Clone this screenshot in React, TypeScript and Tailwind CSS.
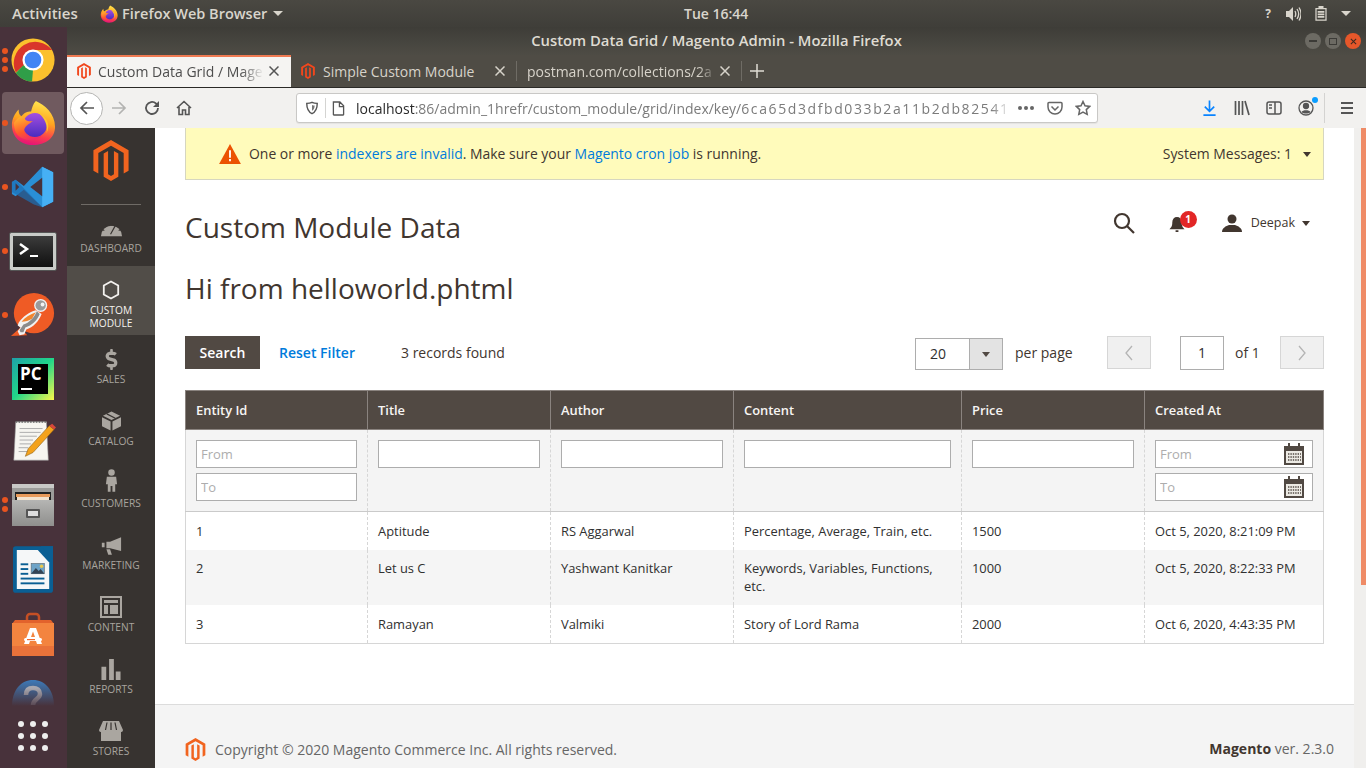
import React from "react";
import { FaDollarSign } from "react-icons/fa";

const SANS = "font-['Open_Sans',sans-serif]";

const MagentoLogo = ({ className }: { className: string }) => (
  <svg viewBox="0 0 36 42" className={className}>
    <path fill="currentColor" d="M18 0 36 10.400v21L31 34.300V13.300L18 5.800 5 13.300v21L0 31.400v-21Z" />
    <path fill="currentColor" d="M18 42 10.500 37.600V13.800l4.500-2.600v23.900l3 1.800 3-1.800V11.200l4.500 2.600v23.800Z" />
  </svg>
);

const Chrome = () => (
  <svg viewBox="0 0 48 48" className="h-[46px] w-[46px]">
    <circle cx="24" cy="24" r="22.500" fill="#fbc02d" />
    <path fill="#d9352b" d="M44 13.500H24L13.800 30 6 37A22.500 22.500 0 0 1 44 13.500Z" />
    <path fill="#2f9e48" d="M6 37.500 14 29.500l10 5-1 12A22.500 22.500 0 0 1 6 37.500Z" />
    <circle cx="24" cy="24" r="11" fill="#fff" />
    <circle cx="24" cy="24" r="8.700" fill="#4285f4" />
  </svg>
);

const Firefox = ({ size, id }: { size: string; id: string }) => (
  <svg viewBox="0 0 48 48" className={size}>
    <defs>
      <linearGradient id={`${id}a`} x1="0.6" y1="0" x2="0.4" y2="1">
        <stop offset="0" stopColor="#ffe54d" />
        <stop offset="0.45" stopColor="#ffa51f" />
        <stop offset="0.78" stopColor="#fb3b4f" />
        <stop offset="1" stopColor="#e3127a" />
      </linearGradient>
      <linearGradient id={`${id}b`} x1="0.5" y1="0" x2="0.5" y2="1">
        <stop offset="0" stopColor="#a44fe0" />
        <stop offset="1" stopColor="#4a2cc0" />
      </linearGradient>
      <linearGradient id={`${id}c`} x1="0.2" y1="0" x2="0.6" y2="1">
        <stop offset="0" stopColor="#ffb52e" />
        <stop offset="0.6" stopColor="#ff5a2a" />
        <stop offset="1" stopColor="#f02a6a" />
      </linearGradient>
    </defs>
    <path fill={`url(#${id}a)`} d="M27 1C36 5 47 14 47 28 47 40 37 47 24 47 11 47 2 38 2 26 2 20 5 14 9 10c0 4 1 6 3 7 3-4 6-5 10-5 1-4 2-8 5-11Z" />
    <circle cx="26" cy="26" r="12.500" fill={`url(#${id}b)`} />
    <path fill={`url(#${id}c)`} d="M4 24c4-6 8-8 12-6-2 2 2 5 8 4-4 3-10 6-9 11 2 6 11 8 18 4-4 7-21 7-27-3-1-3-2-7-2-10Z" />
    <path fill="#ffc42e" d="M29 13c9 4 14 12 9 22 2-8-2-17-9-22Z" />
  </svg>
);

const VSCode = () => (
  <svg viewBox="0 0 48 48" className="h-[44px] w-[44px]">
    <path fill="#2a8fd6" d="M34 2 46 8v32l-12 6-20-19-9 7-4-2.500V18.500L5 16l9 7Z" />
    <path fill="#1c6fb5" d="M1 18.500 5 16l29 30-9-3L1 29.500Z" opacity=".7" />
    <path fill="#46b0f5" d="M34 2 46 8v32l-12 6Z" />
    <path fill="#48323b" d="M34 14 21 24l13 10Z" />
    <path fill="#48323b" d="M5 20v8l4-4Z" />
  </svg>
);

const Terminal = () => (
  <div className="flex h-[37px] w-[46px] items-center rounded-[1px] border-[3px] border-[#c9cbc8] bg-gradient-to-b from-[#3c3c3c] to-[#111] outline outline-1 outline-[#555]">
    <svg viewBox="0 0 40 31" className="h-full w-full">
      <path d="M7 8l7 5-7 5" fill="none" stroke="#fff" strokeWidth="2.500" />
      <path d="M17 20h8" stroke="#fff" strokeWidth="2" />
    </svg>
  </div>
);

const Postman = () => (
  <svg viewBox="0 0 48 48" className="h-[46px] w-[46px]">
    <circle cx="25" cy="22" r="21" fill="#ef5b25" />
    <path fill="#ef5b25" d="M1 46l10-9 7 8Z" />
    <path fill="#f2f2f2" d="M9 32c5-7 11-11 18-13l6 4c-3 8-9 14-16 16l-2 5-5 1-2-4 3-4-3-2Z" />
    <path fill="#f2852f" d="M12 31c4-5 9-8 15-10l-4 7c-3 2-7 3-11 3Z" />
    <path fill="#8b8b8b" d="M28 20l3 3c-3 7-8 12-15 14l-2 5-3 0-1-2 4-6c6-2 11-7 14-14Z" />
    <circle cx="32" cy="14" r="6.800" fill="#f2f2f2" />
    <circle cx="32" cy="14" r="5.400" fill="#9a9a9a" />
    <circle cx="34" cy="13" r="2" fill="#f2f2f2" />
  </svg>
);

const PyCharm = () => (
  <svg viewBox="0 0 42 42" className="h-[42px] w-[42px]">
    <defs>
      <linearGradient id="pcg" x1="0" y1="0" x2="1" y2="1">
        <stop offset="0" stopColor="#1ea0a8" />
        <stop offset="0.5" stopColor="#21d789" />
        <stop offset="1" stopColor="#fcf84a" />
      </linearGradient>
    </defs>
    <rect width="42" height="42" fill="url(#pcg)" />
    <rect x="6" y="6" width="30" height="30" fill="#000" />
    <text x="8" y="22" fill="#fff" fontSize="17" fontWeight="700" fontFamily="Open Sans">PC</text>
    <rect x="9" y="30" width="11" height="2" fill="#fff" />
  </svg>
);

const Editor = () => (
  <svg viewBox="0 0 48 48" className="h-[46px] w-[46px]">
    <path fill="#f6f5f0" stroke="#999" strokeWidth=".6" d="M6 4h32l2 40H4Z" />
    <path stroke="#666" strokeWidth="2" strokeDasharray="1.500 1.500" d="M6 4h32" />
    <path stroke="#aaa" strokeWidth="1" d="M10 11h24M10 15h22M10 19h18M10 23h14M10 27h12M9 31h10M9 35h12" />
    <path fill="#f3a21c" stroke="#8a5a10" strokeWidth=".6" d="M41 8l5 4-22 24-8 4 3-8Z" />
    <path fill="#d8473a" d="M41 8l3-2 4 4-2 2Z" />
  </svg>
);

const Files = () => (
  <svg viewBox="0 0 44 44" className="h-[44px] w-[44px]">
    <defs>
      <linearGradient id="flg" x1="0" y1="0" x2="0" y2="1">
        <stop offset="0" stopColor="#b5b5b3" />
        <stop offset="1" stopColor="#8f8f8d" />
      </linearGradient>
    </defs>
    <rect x="1" y="1" width="42" height="42" rx="2" fill="#9c9c9a" />
    <rect x="1" y="1" width="42" height="4" fill="#c8c8c6" />
    <rect x="4" y="9" width="36" height="9" fill="#222" />
    <rect x="5" y="11" width="34" height="3" fill="#e89a5a" />
    <rect x="6" y="14" width="32" height="3" fill="#f4e3ce" />
    <rect x="1" y="17" width="42" height="26" fill="url(#flg)" />
    <rect x="15" y="26" width="14" height="9" rx="1" fill="#555" />
    <rect x="17" y="28" width="10" height="5" fill="#ddd" />
  </svg>
);

const Writer = () => (
  <svg viewBox="0 0 42 50" className="h-[48px] w-[40px]">
    <path fill="#0a5f94" d="M3 0h39v46a3 3 0 0 1-3 3H3a3 3 0 0 1-3-3V3a3 3 0 0 1 3-3Z" />
    <path fill="#f5f7f8" d="M4 4h22l12 13v28H4Z" />
    <path fill="#0a5f94" d="M29 0h13v14Z" />
    <rect x="8" y="18" width="8" height="2" fill="#0a5f94" />
    <rect x="8" y="23" width="8" height="2" fill="#0a5f94" />
    <rect x="8" y="28" width="8" height="2" fill="#0a5f94" />
    <rect x="8" y="33" width="25" height="2" fill="#0a5f94" />
    <rect x="8" y="38" width="25" height="2" fill="#0a5f94" />
    <rect x="19" y="18" width="14" height="11" fill="#6da3c7" stroke="#555" strokeWidth=".5" />
    <path fill="#345" d="M19 29l5-6 3 3 2-2 4 5Z" />
    <circle cx="30" cy="21" r="1.800" fill="#ecc84a" />
  </svg>
);

const Software = () => (
  <svg viewBox="0 0 42 44" className="h-[44px] w-[42px]">
    <path fill="none" stroke="#c54f24" strokeWidth="2.500" d="M15 11V5a3 3 0 0 1 3-3h6a3 3 0 0 1 3 3v6" />
    <path fill="#e2622c" d="M3 8h36l3 4H0Z" />
    <path fill="#f3843f" d="M0 11h42v33H0Z" />
    <path fill="#e9723a" d="M0 34h42v10H0Z" />
    <path fill="#fff" d="M18 16h6l6 16h-5l-1-3h-6l-1 3h-5Zm3 3.500L19 25h4Z" />
    <rect x="12" y="26" width="18" height="3" rx="1.500" fill="#fff" />
    <rect x="15" y="27" width="8" height="1.200" fill="#ef6a30" />
  </svg>
);

const Help = () => (
  <svg viewBox="0 0 42 26" className="h-[26px] w-[42px]">
    <defs>
      <linearGradient id="hg" x1="0" y1="0" x2="0" y2="1">
        <stop offset="0" stopColor="#3d7ab8" />
        <stop offset="1" stopColor="#48323b" />
      </linearGradient>
      <linearGradient id="hq" x1="0" y1="0" x2="0" y2="1">
        <stop offset="0" stopColor="#a8a8b0" />
        <stop offset="1" stopColor="#5a4a55" />
      </linearGradient>
    </defs>
    <path fill="url(#hg)" d="M0 26C0 10 9 0 21 0s21 10 21 26Z" />
    <path fill="none" stroke="url(#hq)" strokeWidth="4.500" d="M14 15c0-5 3-7 7-7s7 2 7 6c0 5-7 5-7 11" />
  </svg>
);

const AppGrid = () => (
  <div className="grid grid-cols-3 gap-x-[6px] gap-y-[6px]">
    {[0, 1, 2, 3, 4, 5, 6, 7, 8].map((d) => (
      <span key={d} className="h-[6px] w-[6px] rounded-full bg-[#eeeeee]" />
    ))}
  </div>
);

const dock = [
  { id: "chrome", icon: <Chrome />, dots: 3, h: "h-[65px]" },
  { id: "firefox", icon: <Firefox size="h-[46px] w-[46px]" id="fxd" />, dots: 1, h: "h-[62px]", active: true },
  { id: "code", icon: <VSCode />, dots: 1, h: "h-[65px]" },
  { id: "term", icon: <Terminal />, dots: 1, h: "h-[64px]" },
  { id: "postman", icon: <Postman />, dots: 1, h: "h-[64px]" },
  { id: "pycharm", icon: <PyCharm />, dots: 0, h: "h-[63px]" },
  { id: "editor", icon: <Editor />, dots: 0, h: "h-[62px]" },
  { id: "files", icon: <Files />, dots: 2, h: "h-[65px]" },
  { id: "writer", icon: <Writer />, dots: 0, h: "h-[65px]" },
  { id: "software", icon: <Software />, dots: 0, h: "h-[64px]" },
];

const Dock = () => (
  <aside className="flex h-full w-[67px] shrink-0 flex-col items-start overflow-hidden bg-[#48323b] pl-[2px]">
    {dock.map((d) => (
      <div key={d.id} className={`relative flex w-[62px] items-center justify-center rounded-[4px] ${d.h} ${d.active ? "bg-[#705a5f]" : ""}`}>
        <div className="absolute left-0 top-0 flex h-full flex-col justify-center gap-[3px]">
          {Array.from({ length: d.dots }).map((_, i) => (
            <span key={i} className="h-[6px] w-[6px] rounded-full bg-[#e95420]" />
          ))}
        </div>
        {d.icon}
      </div>
    ))}
    <div className="ml-[10px] mt-[14px] flex h-[26px] items-start justify-center">
      <Help />
    </div>
    <div className="ml-[16px] mt-[15px]">
      <AppGrid />
    </div>
  </aside>
);

const TopBar = () => (
  <div className={`flex h-[27px] shrink-0 items-center bg-gradient-to-b from-[#4a4842] to-[#3f3e39] pl-[12px] pr-[15px] text-[14.500px] font-semibold text-[#d9d5cc] ${SANS}`}>
    <div className="flex w-[672px] items-center">
      <span className="w-[88px] text-[15px]">Activities</span>
      <Firefox size="h-[18px] w-[18px]" id="fxt" />
      <span className="ml-[4px]">Firefox Web Browser</span>
      <span className="ml-[6px] h-0 w-0 border-x-[5px] border-t-[5px] border-x-transparent border-t-[#d9d5cc]" />
    </div>
    <span className="text-[14px]">Tue 16:44</span>
    <div className="ml-auto flex items-center gap-[14px]">
      <span className="text-[12px] font-bold">?</span>
      <svg viewBox="0 0 16 16" className="h-[16px] w-[16px]" fill="#d9d5cc">
        <path d="M1 5h3l4-4v14l-4-4H1Z" />
        <path fill="none" stroke="#d9d5cc" strokeWidth="1.300" d="M10 5c1 2 1 4 0 6M12 3c2 3 2 7 0 10M14 1.500c2.500 4 2.500 9 0 13" />
      </svg>
      <svg viewBox="0 0 14 18" className="h-[15px] w-[12px]" fill="none" stroke="#d9d5cc" strokeWidth="1.500">
        <path d="M1 3h12v14H1Z" />
        <path fill="#d9d5cc" stroke="none" d="M4 0h6v3H4ZM3 6h8v2H3Zm0 3h8v2H3Zm0 3h8v2H3Z" />
      </svg>
      <span className="h-0 w-0 border-x-[5px] border-t-[5px] border-x-transparent border-t-[#d9d5cc]" />
    </div>
  </div>
);

const TitleBar = () => (
  <div className={`relative flex h-[28px] shrink-0 items-center justify-center bg-gradient-to-b from-[#3e3d38] to-[#4e4c45] pb-[2px] text-[14.800px] font-semibold text-[#dfdbd2] ${SANS}`}>
    <span>Custom Data Grid / Magento Admin - Mozilla Firefox</span>
    <div className="absolute right-[5px] top-[6px] flex gap-[4px]">
      <span className="flex h-[16px] w-[16px] items-center justify-center rounded-full bg-[#6c6a63]">
        <span className="h-[1.500px] w-[8px] bg-[#3c3b37]" />
      </span>
      <span className="flex h-[16px] w-[16px] items-center justify-center rounded-full bg-[#6c6a63]">
        <span className="h-[7px] w-[8px] border border-[#3c3b37]" />
      </span>
      <span className="flex h-[16px] w-[16px] items-center justify-center rounded-full bg-[#e6572a]">
        <svg viewBox="0 0 8 8" className="h-[7px] w-[7px]" stroke="#3c2a20" strokeWidth="1.200">
          <path d="M1 1l6 6M7 1 1 7" />
        </svg>
      </span>
    </div>
  </div>
);

const X = ({ color }: { color: string }) => (
  <svg viewBox="0 0 10 10" className="h-[10px] w-[10px]" fill="none" stroke={color} strokeWidth="1.500">
    <path d="M.5.5l9 9M9.500.5l-9 9" />
  </svg>
);

const TabBar = () => (
  <div className={`flex h-[33px] shrink-0 items-stretch border-b border-[#2b2a27] bg-[#4f4c45] text-[14px] ${SANS}`}>
    <div className="flex w-[224px] items-center border-t-2 border-[#ef7a52] bg-[#f5f4f2] pb-[2px] pl-[10px] pr-[12px] text-[#4d4d4d]">
      <MagentoLogo className="h-[16px] w-[14px] text-[#f1471d]" />
      <span className="ml-[7px] flex-1 whitespace-nowrap [mask-image:linear-gradient(to_right,black_86%,transparent)]">Custom Data Grid / Mage</span>
      <span className="ml-[5px]"><X color="#555555" /></span>
    </div>
    <div className="flex w-[225px] items-center pl-[10px] pr-[11px] text-[#d7d3ca]">
      <MagentoLogo className="h-[16px] w-[14px] text-[#f1471d]" />
      <span className="ml-[8px] flex-1 whitespace-nowrap">Simple Custom Module</span>
      <X color="#d7d3ca" />
    </div>
    <div className="my-[6px] w-px bg-[#6f6c65]" />
    <div className="flex w-[224px] items-center pl-[10px] pr-[11px] text-[#d7d3ca]">
      <span className="flex-1 whitespace-nowrap [mask-image:linear-gradient(to_right,black_90%,transparent)]">postman.com/collections/2a</span>
      <span className="ml-[3px]"><X color="#d7d3ca" /></span>
    </div>
    <div className="my-[6px] w-px bg-[#6f6c65]" />
    <div className="flex w-[28px] items-center justify-center pl-[2px]">
      <svg viewBox="0 0 14 14" className="h-[14px] w-[14px]" stroke="#e0dcd3" strokeWidth="1.500">
        <path d="M7 0v14M0 7h14" />
      </svg>
    </div>
  </div>
);

const NavBar = () => (
  <div className={`flex h-[40px] shrink-0 items-center bg-[#f2f1ef] ${SANS}`}>
    <div className="ml-[3px] flex h-[33px] w-[33px] items-center justify-center rounded-full border border-[#b5b5b3] bg-white">
      <svg viewBox="0 0 16 16" className="h-[16px] w-[16px]" fill="none" stroke="#555" strokeWidth="1.700">
        <path d="M15 8H2M8 2 2 8l6 6" />
      </svg>
    </div>
    <svg viewBox="0 0 16 16" className="ml-[8px] h-[16px] w-[16px]" fill="none" stroke="#b3b3b1" strokeWidth="1.700">
      <path d="M1 8h13M8 2l6 6-6 6" />
    </svg>
    <svg viewBox="0 0 16 16" className="ml-[17px] h-[16px] w-[16px]" fill="none" stroke="#555" strokeWidth="1.800">
      <path d="M14 8a6 6 0 1 1-2-4.500L14 5" />
      <path fill="#555" stroke="none" d="M15 1v6H9Z" />
    </svg>
    <svg viewBox="0 0 16 16" className="ml-[16px] h-[16px] w-[16px]" fill="none" stroke="#555" strokeWidth="1.600">
      <path d="M1 8l7-6.500L15 8M3 7v7.500h3.500V10h3v4.500H13V7" />
    </svg>
    <div className="ml-[104px] flex h-[30px] w-[802px] items-center rounded-[3px] border border-[#c9c8c6] bg-white pl-[8px] pr-[6px] text-[14px] shadow-[0_1px_1px_rgba(0,0,0,0.06)]">
      <svg viewBox="0 0 16 16" className="h-[14px] w-[14px]" fill="#fff" stroke="#555" strokeWidth="1.600">
        <path d="M8 1.500c2 1 4 1.200 6 1.200 0 6-2 10-6 11.800-4-1.800-6-5.800-6-11.800 2 0 4-.2 6-1.200Z" />
        <path fill="#777" stroke="none" d="M8 4.500c1 .4 2 .6 3 .6 0 3-1 5-3 6Z" />
      </svg>
      <span className="mx-[6px] h-[20px] w-px bg-[#d4d4d2]" />
      <svg viewBox="0 0 14 16" className="h-[15px] w-[13px]" fill="none" stroke="#555" strokeWidth="1.400">
        <path d="M1.500 1h7l4 4v9.500a.500.500 0 0 1-.5.500H2a.500.500 0 0 1-.5-.5ZM8 1v5h4.500" />
      </svg>
      <span className="ml-[11px] w-[655px] whitespace-nowrap text-[#7b7b7b] [mask-image:linear-gradient(to_right,black_97%,transparent)]">
        <span className="text-[#2a2a2a]">localhost</span>:86/admin_1hrefr/custom_module/grid/index/key/<span className="tracking-[1.600px]">6ca65d3dfbd033b2a11b2db82541</span>
      </span>
      <span className="ml-[7px] flex gap-[2px]">
        <span className="h-[4px] w-[4px] rounded-full bg-[#666]" />
        <span className="h-[4px] w-[4px] rounded-full bg-[#666]" />
        <span className="h-[4px] w-[4px] rounded-full bg-[#666]" />
      </span>
      <svg viewBox="0 0 16 16" className="ml-[13px] h-[16px] w-[16px]" fill="none" stroke="#666" strokeWidth="1.500">
        <path d="M2 2.500h12a1 1 0 0 1 1 1V7a7 7 0 0 1-14 0V3.500a1 1 0 0 1 1-1ZM4.500 6.500 8 10l3.500-3.500" />
      </svg>
      <svg viewBox="0 0 16 16" className="ml-[12px] h-[16px] w-[16px]" fill="none" stroke="#666" strokeWidth="1.500">
        <path d="M8 1.500l2 4.300 4.700.6-3.400 3.200.9 4.700L8 12l-4.200 2.300.9-4.700L1.300 6.400 6 5.800Z" />
      </svg>
    </div>
    <svg viewBox="0 0 16 18" className="ml-[104px] h-[18px] w-[15px]" fill="none" stroke="#0a84ff" strokeWidth="1.800">
      <path d="M8 1v11M3 7.500 8 12.500l5-5M1.500 16.500h13" />
    </svg>
    <svg viewBox="0 0 16 16" className="ml-[17px] h-[16px] w-[16px]" fill="none" stroke="#555" strokeWidth="1.700">
      <path d="M1.500 1v14M5 1v14M8.500 1v14M11 1l4 14" />
    </svg>
    <svg viewBox="0 0 16 16" className="ml-[16px] h-[16px] w-[16px]" fill="none" stroke="#555" strokeWidth="1.500">
      <rect x="1" y="2" width="14" height="12" rx="2" />
      <path d="M9 2v12" />
      <path d="M3 5h3M3 8h3" />
    </svg>
    <span className="relative ml-[16px]">
      <svg viewBox="0 0 16 16" className="h-[16px] w-[16px]" fill="none" stroke="#555" strokeWidth="1.300">
        <circle cx="8" cy="8" r="7" />
        <circle cx="8" cy="6" r="2.500" fill="#555" />
        <path fill="#555" stroke="none" d="M3.500 12c1-2.500 8-2.500 9 0-2 2-7 2-9 0Z" />
      </svg>
      <span className="absolute right-[-4px] top-[-3px] h-[6px] w-[6px] rounded-full bg-[#0a9dff]" />
    </span>
    <span className="ml-[10px] h-[30px] w-px bg-[#d4d3d1]" />
    <svg viewBox="0 0 14 14" className="ml-[15px] h-[14px] w-[14px]" stroke="#555" strokeWidth="1.800">
      <path d="M1 2h12M1 7h12M1 12h12" />
    </svg>
  </div>
);

const menuFill = "#aaa6a0";

const menu = [
  {
    label: ["Dashboard"],
    h: "h-[61px] pt-[12px]",
    icon: (
      <svg viewBox="0 0 24 16" className="h-[17px] w-[23px]" fill={menuFill}>
        <path d="M1 16a11 11 0 1 1 22 0Z" />
        <path stroke="#373330" strokeWidth="1.200" d="M11 14l5-9M12 5V2.500M7.500 6 6 4M16.500 6 18 4M4.500 10l-2-1M19.500 10l2-1" />
      </svg>
    ),
  },
  {
    label: ["Custom", "Module"],
    h: "h-[69px] pt-[13px] bg-[#514d48] text-[#f4f2ef]",
    icon: (
      <svg viewBox="0 0 20 22" className="h-[20px] w-[18px]" fill="none" stroke="#f4f2ef" strokeWidth="2">
        <path d="M10 1.500 18 6v10l-8 4.500L2 16V6Z" />
      </svg>
    ),
  },
  {
    label: ["Sales"],
    h: "h-[62px] pt-[13px]",
    icon: <FaDollarSign className="h-[21px] w-[15px] text-[#aaa6a0]" />,
  },
  {
    label: ["Catalog"],
    h: "h-[62px] pt-[13px]",
    icon: (
      <svg viewBox="0 0 20 20" className="h-[20px] w-[19px]" fill={menuFill}>
        <path d="M10 0l9 4.500-9 4.500-9-4.500Z" />
        <path d="M0 6l9 4.500V20L0 15.500ZM20 6l-9 4.500V20l9-4.500Z" />
        <path stroke="#373330" strokeWidth="1.200" d="M5 2.500l9 4.500" />
      </svg>
    ),
  },
  {
    label: ["Customers"],
    h: "h-[62px] pt-[13px]",
    icon: (
      <svg viewBox="0 0 14 24" className="mb-[5px] h-[23px] w-[13px]" fill={menuFill}>
        <circle cx="7" cy="3.500" r="3.500" />
        <path d="M2 8h10l1 8h-2v8H8v-6H6v6H3v-8H1Z" />
      </svg>
    ),
  },
  {
    label: ["Marketing"],
    h: "h-[62px] pt-[13px]",
    icon: (
      <svg viewBox="0 0 24 20" className="h-[19px] w-[22px]" fill={menuFill}>
        <path d="M23 1v15L11 13H7V6h4Z" />
        <path d="M2 7h3v5H2ZM7 14h4l2 6H9Z" />
      </svg>
    ),
  },
  {
    label: ["Content"],
    h: "h-[62px] pt-[13px]",
    icon: (
      <svg viewBox="0 0 22 22" className="h-[22px] w-[22px]" fill={menuFill}>
        <path fillRule="evenodd" d="M0 0h22v22H0Zm2 2v18h18V2Z" />
        <path d="M4 4h14v3H4ZM4 9h4v9H4ZM10 9h8v9h-8Z" />
      </svg>
    ),
  },
  {
    label: ["Reports"],
    h: "h-[62px] pt-[13px]",
    icon: (
      <svg viewBox="0 0 20 22" className="h-[21px] w-[20px]" fill={menuFill}>
        <path d="M0 8h5v14H0ZM8 0h5v22H8ZM15 13h5v9h-5Z" />
      </svg>
    ),
  },
  {
    label: ["Stores"],
    h: "h-[61px] pt-[13px]",
    icon: (
      <svg viewBox="0 0 24 20" className="h-[20px] w-[24px]" fill={menuFill}>
        <path d="M4 0h16l4 9c0 2-2 2-2 2v9H2v-9s-2 0-2-2Z" />
        <path stroke="#373330" strokeWidth="1.200" d="M8 1.500 6.500 9M12 1.500V9M16 1.500 17.500 9" />
      </svg>
    ),
  },
];

const AdminMenu = () => (
  <nav className={`flex h-full w-[88px] shrink-0 flex-col bg-[#373330] text-[10.200px] uppercase leading-[13px] text-[#a8a49e] ${SANS}`}>
    <div className="mx-[14px] flex h-[77px] shrink-0 items-start justify-center border-b border-[#6f6b66] pt-[12px]">
      <MagentoLogo className="h-[41px] w-[36px] text-[#f1641f]" />
    </div>
    {menu.map((m) => (
      <div key={m.label[0]} className={`flex shrink-0 flex-col items-center ${m.h}`}>
        <div className="flex h-[22px] items-center justify-center">{m.icon}</div>
        <div className="mt-[3px] text-center">
          {m.label.map((l) => (
            <div key={l}>{l}</div>
          ))}
        </div>
      </div>
    ))}
  </nav>
);

const Caret = ({ className }: { className: string }) => (
  <span className={`h-0 w-0 border-x-[4.500px] border-t-[5px] border-x-transparent ${className}`} />
);

const Calendar = () => (
  <svg viewBox="0 0 22 22" className="absolute right-[8px] top-[3px] h-[22px] w-[22px]">
    <path fill="#514943" d="M1 3h20v19H1Z" />
    <rect x="5" y="0" width="2" height="5" fill="#514943" />
    <rect x="15" y="0" width="2" height="5" fill="#514943" />
    <rect x="3" y="8" width="16" height="12" fill="#eceae4" />
    <path stroke="#514943" strokeWidth="1.400" strokeDasharray="1.400 1" d="M5 11h13M5 14h13M5 17h13" />
  </svg>
);

const FilterInput = ({ w, placeholder, cal }: { w: string; placeholder?: string; cal?: boolean }) => (
  <div className={`relative h-[28px] ${w}`}>
    <input
      placeholder={placeholder}
      readOnly
      className="h-full w-full border border-[#adadad] bg-white px-[4px] text-[13px] text-[#303030] outline-none placeholder:text-[#adadad]"
    />
    {cal && <Calendar />}
  </div>
);

const columns = ["Entity Id", "Title", "Author", "Content", "Price", "Created At"];

const rows = [
  ["1", "Aptitude", "RS Aggarwal", "Percentage, Average, Train, etc.", "1500", "Oct 5, 2020, 8:21:09 PM"],
  ["2", "Let us C", "Yashwant Kanitkar", "Keywords, Variables, Functions, etc.", "1000", "Oct 5, 2020, 8:22:33 PM"],
  ["3", "Ramayan", "Valmiki", "Story of Lord Rama", "2000", "Oct 6, 2020, 4:43:35 PM"],
];

const Grid = () => (
  <table className="mt-[21px] w-[1138px] table-fixed border-collapse text-[12.900px] text-[#303030]">
    <colgroup>
      <col className="w-[182px]" />
      <col className="w-[183px]" />
      <col className="w-[183px]" />
      <col className="w-[228px]" />
      <col className="w-[183px]" />
      <col className="w-[179px]" />
    </colgroup>
    <thead>
      <tr className="h-[39px] bg-[#514943]">
        {columns.map((c) => (
          <th key={c} className="border border-[#8a837f] px-[10px] pt-[2px] text-left font-semibold text-[#f7f5f3]">
            {c}
          </th>
        ))}
      </tr>
      <tr className="h-[82px] border-x border-b border-x-[#d6d6d6] border-b-[#cacaca] bg-[#f4f4f4] align-top">
        <td className="border-r border-dashed border-[#d6d6d6] px-[10px] pt-[10px]">
          <div className="flex flex-col gap-[5px]">
            <FilterInput w="w-[161px]" placeholder="From" />
            <FilterInput w="w-[161px]" placeholder="To" />
          </div>
        </td>
        <td className="border-r border-dashed border-[#d6d6d6] px-[10px] pt-[10px]">
          <FilterInput w="w-[162px]" />
        </td>
        <td className="border-r border-dashed border-[#d6d6d6] px-[10px] pt-[10px]">
          <FilterInput w="w-[162px]" />
        </td>
        <td className="border-r border-dashed border-[#d6d6d6] px-[10px] pt-[10px]">
          <FilterInput w="w-[207px]" />
        </td>
        <td className="border-r border-dashed border-[#d6d6d6] px-[10px] pt-[10px]">
          <FilterInput w="w-[162px]" />
        </td>
        <td className="px-[10px] pt-[10px]">
          <div className="flex flex-col gap-[5px]">
            <FilterInput w="w-[158px]" placeholder="From" cal />
            <FilterInput w="w-[158px]" placeholder="To" cal />
          </div>
        </td>
      </tr>
    </thead>
    <tbody>
      {rows.map((r, i) => (
        <tr key={r[0]} className={`border-x border-[#d6d6d6] align-top last:border-b ${i === 1 ? "h-[55px] bg-[#f5f5f5]" : i === 2 ? "h-[39px] bg-white" : "h-[38px] bg-white"}`}>
          {r.map((cell, j) => (
            <td key={j} className={`px-[10px] leading-[18px] ${i === 1 ? "pt-[9px]" : "pt-[10px]"} ${j < 5 ? "border-r border-dashed border-[#d6d6d6]" : ""}`}>
              {cell}
            </td>
          ))}
        </tr>
      ))}
    </tbody>
  </table>
);

const Chevron = ({ d }: { d: string }) => (
  <svg viewBox="0 0 10 16" className="h-[16px] w-[10px]" fill="none" stroke="#b4b4b4" strokeWidth="1.300">
    <path d={d} />
  </svg>
);

const Toolbar = () => (
  <div className="mt-[29px] flex h-[33px] items-center text-[14px] text-[#41362f]">
    <div className="flex h-[33px] w-[75px] items-center justify-center bg-[#514943] font-semibold text-white">Search</div>
    <span className="ml-[19px] font-semibold text-[#007bdb]">Reset Filter</span>
    <span className="ml-[46px] text-[#41362f]">3 records found</span>
    <div className="ml-auto flex items-center">
      <div className="mt-[3px] flex h-[32px] w-[88px] border border-[#adadad]">
        <span className="flex-1 pl-[14px] leading-[30px] text-[#303030]">20</span>
        <span className="flex w-[33px] items-center justify-center border-l border-[#adadad] bg-[#e3e3e3]">
          <Caret className="border-t-[#514943]" />
        </span>
      </div>
      <span className="ml-[12px] w-[92px]">per page</span>
      <div className="flex h-[33px] w-[44px] items-center justify-center border border-[#d6d6d6] bg-[#f0f0f0]">
        <Chevron d="M8 1 2 8l6 7" />
      </div>
      <div className="ml-[29px] flex h-[34px] w-[44px] items-center justify-center border border-[#adadad] text-[#303030]">1</div>
      <span className="ml-[11px] w-[45px]">of 1</span>
      <div className="flex h-[33px] w-[44px] items-center justify-center border border-[#d6d6d6] bg-[#f0f0f0]">
        <Chevron d="M2 1l6 7-6 7" />
      </div>
    </div>
  </div>
);

const Main = () => (
  <main className={`relative flex h-full flex-1 flex-col overflow-hidden bg-white ${SANS}`}>
    <div className="px-[30px]">
      <div className="flex h-[52px] items-center border border-t-0 border-[#d6d6c0] bg-[#fffbbb] pl-[33px] pr-[12px] pt-[1px] text-[13.950px] text-[#41362f]">
        <svg viewBox="0 0 24 22" className="h-[20px] w-[22px]">
          <path fill="#eb5202" d="M12 0 24 22H0Z" />
          <path fill="#fff" d="M11 7h2v8h-2ZM11 16.500h2v2.500h-2Z" />
        </svg>
        <span className="ml-[8px]">
          One or more <span className="text-[#007bdb]">indexers are invalid</span>. Make sure your <span className="text-[#007bdb]">Magento cron job</span> is running.
        </span>
        <span className="ml-auto">System Messages: 1</span>
        <Caret className="ml-[11px] border-t-[#41362f]" />
      </div>
      <div className="relative mt-[28px] flex h-[38px] items-center justify-between">
        <h1 className="text-[28px] font-normal leading-[38px] text-[#41362f]">Custom Module Data</h1>
        <div className="mb-[8px] flex items-center pr-[14px] text-[12.500px] text-[#41362f]">
          <svg viewBox="0 0 22 22" className="h-[22px] w-[22px]" fill="none" stroke="#41362f" strokeWidth="2.200">
            <circle cx="9" cy="9" r="7" />
            <path d="M14 14l7 7" />
          </svg>
          <span className="relative ml-[34px] h-[20px] w-[18px]">
            <svg viewBox="0 0 16 18" className="absolute left-0 top-[3px] h-[17px] w-[16px]" fill="#41362f">
              <path d="M8 1c3 0 5 2 5 6 0 4 1 5 3 7H0c2-2 3-3 3-7 0-4 2-6 5-6ZM6.500 15h3v2h-3Z" />
            </svg>
            <span className="absolute left-[11px] top-[-2px] flex h-[17px] w-[17px] items-center justify-center rounded-full bg-[#e22626] text-[10px] font-bold text-white">1</span>
          </span>
          <svg viewBox="0 0 20 18" className="ml-[35px] h-[18px] w-[20px]" fill="#41362f">
            <circle cx="10" cy="5" r="4.500" />
            <path d="M0 18c0-4 4-6 7-7h6c3 1 7 3 7 7Z" />
          </svg>
          <span className="ml-[9px]">Deepak</span>
          <Caret className="ml-[7px] border-t-[#41362f]" />
        </div>
      </div>
      <h2 className="mt-[23px] text-[28px] font-normal leading-[38px] text-[#41362f]">Hi from helloworld.phtml</h2>
      <Toolbar />
      <Grid />
    </div>
    <footer className="mt-[60px] flex h-[64px] shrink-0 items-start justify-between border-t border-[#dcdcdc] bg-[#f4f4f4] px-[30px] pt-[33px] text-[14px] text-[#666]">
      <div className="flex items-center">
        <MagentoLogo className="h-[23px] w-[21px] text-[#f1641f]" />
        <span className="ml-[9px]">Copyright © 2020 Magento Commerce Inc. All rights reserved.</span>
      </div>
      <span className="relative left-[10px]"><b className="font-bold text-[#41362f]">Magento</b> ver. 2.3.0</span>
    </footer>
  </main>
);

const Scrollbar = () => (
  <div className="flex h-full w-[12px] shrink-0 justify-end bg-[#f0efed]">
    <div className="h-[457px] w-[5px] bg-[#ef8b66]" />
  </div>
);

export default function App() {
  return (
    <div className="flex h-screen w-screen flex-col overflow-hidden">
      <TopBar />
      <div className="flex min-h-0 flex-1">
        <Dock />
        <div className="flex min-w-0 flex-1 flex-col">
          <TitleBar />
          <TabBar />
          <NavBar />
          <div className="flex min-h-0 flex-1">
            <AdminMenu />
            <Main />
            <Scrollbar />
          </div>
        </div>
      </div>
    </div>
  );
}
